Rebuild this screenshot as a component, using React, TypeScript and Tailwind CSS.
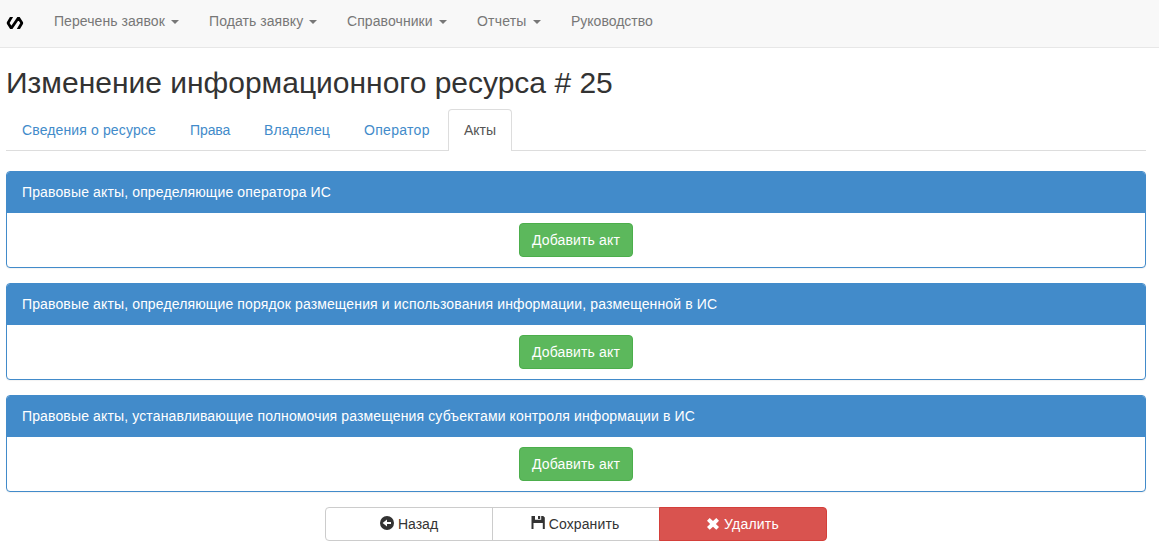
import React from "react";

const menu = [
  { label: "Перечень заявок", caret: true, style: "w-[155px] tracking-[0.06px]" },
  { label: "Подать заявку", caret: true, style: "w-[138px] tracking-[0.07px]" },
  { label: "Справочники", caret: true, style: "w-[130px] tracking-[0.08px]" },
  { label: "Отчеты", caret: true, style: "w-[94px] tracking-[0.2px]" },
  { label: "Руководство", caret: false, style: "w-[112px]" },
];

const tabs = [
  { label: "Сведения о ресурсе", style: "w-[166px] tracking-[0.13px]" },
  { label: "Права", style: "w-[72px] tracking-[-0.1px]" },
  { label: "Владелец", style: "w-[98px] tracking-[0.16px]" },
  { label: "Оператор", style: "w-[98px] tracking-[0.3px]" },
  { label: "Акты", style: "w-16", active: true },
];

const panels = [
  "Правовые акты, определяющие оператора ИС",
  "Правовые акты, определяющие порядок размещения и использования информации, размещенной в ИС",
  "Правовые акты, устанавливающие полномочия размещения субъектами контроля информации в ИС",
];

function Logo() {
  return (
    <svg width="18" height="12" viewBox="0 0 18 12" fill="none" stroke="#000" strokeWidth="2.8">
      <path d="M5.9 -0.6L2 6L5.3 11.2L12.5 0.8L15.9 6L12 12.6" strokeLinejoin="bevel" />
    </svg>
  );
}

function BackIcon() {
  return (
    <svg className="mb-0.5" width="14" height="14" viewBox="0 0 14 14">
      <circle cx="7" cy="7" r="7" fill="#333" />
      <path d="M2.6 7L7 3.5V5.9H11V8.1H7V10.5Z" fill="#fff" />
    </svg>
  );
}

function SaveIcon() {
  return (
    <svg className="mb-0.5" width="14" height="14" viewBox="0 0 14 14">
      <path d="M0.5 0H4V3.8H10.2V0H12.2L13.8 1.6V13H11.8V7H2.5V13H0.5Z" fill="#333" />
      <path d="M7 0H9.2V3H7Z" fill="#333" />
    </svg>
  );
}

function RemoveIcon() {
  return (
    <svg className="mb-px" width="14" height="14" viewBox="0 0 14 14">
      <path
        d="M3.7 1L7 4.1L10.3 1L13 3.7L9.9 6.9L13 10.1L10.3 12.8L7 9.7L3.7 12.8L1 10.1L4.1 6.9L1 3.7Z"
        fill="#fff"
      />
    </svg>
  );
}

export default function App() {
  return (
    <div className="min-h-[551px] bg-white font-['Liberation_Sans',Arial,sans-serif] text-sm leading-5 text-[#333]">
      <nav className="flex h-12 items-start border-b border-[#e7e7e7] bg-[#f8f8f8] pl-1.5">
        <div className="mt-[17px] mr-[15px] w-[18px]">
          <Logo />
        </div>
        <ul className="flex">
          {menu.map((item) => (
            <li
              key={item.label}
              className={`flex items-center justify-between px-[15px] pt-[11px] whitespace-nowrap text-[#777] ${item.style}`}
            >
              {item.label}
              {item.caret && (
                <span className="mt-0.5 h-0 w-0 border-x-4 border-t-4 border-x-transparent border-t-[#777]" />
              )}
            </li>
          ))}
        </ul>
      </nav>
      <main className="w-[1146px] pl-1.5">
        <h1 className="pt-[18px] pb-2.5 text-[30px] leading-[33px]">Изменение информационного ресурса # 25</h1>
        <ul className="flex h-[42px] gap-0.5 border-b border-[#ddd]">
          {tabs.map((tab) => (
            <li
              key={tab.label}
              className={`h-[42px] px-[15px] py-2.5 whitespace-nowrap ${tab.style} ${
                tab.active
                  ? "rounded-t border border-b-0 border-[#ddd] bg-white text-[#555]"
                  : "border border-transparent text-[#428bca]"
              }`}
            >
              {tab.label}
            </li>
          ))}
        </ul>
        <div className="mt-5 flex flex-col gap-[15px]">
          {panels.map((title) => (
            <section key={title} className="rounded border border-[#428bca] bg-white shadow-[0_1px_1px_rgba(0,0,0,0.05)]">
              <h2 className="h-[41px] rounded-t-[3px] bg-[#428bca] px-[15px] py-2.5 tracking-[0.134px] text-white">
                {title}
              </h2>
              <div className="flex justify-center py-2.5">
                <button className="h-[34px] w-[114px] rounded border border-[#4cae4c] bg-[#5cb85c] tracking-[0.16px] whitespace-nowrap text-white">
                  Добавить акт
                </button>
              </div>
            </section>
          ))}
        </div>
        <div className="mx-auto mt-[15px] flex h-[34px] w-[502px]">
          <button className="flex w-[168px] items-center justify-center gap-1 rounded-l border border-[#ccc]">
            <BackIcon />
            Назад
          </button>
          <button className="-ml-px flex w-[168px] items-center justify-center gap-1 border border-[#ccc] pr-0.5 tracking-[0.12px]">
            <SaveIcon />
            Сохранить
          </button>
          <button className="-ml-px flex w-[168px] items-center justify-center gap-1 rounded-r border border-[#d43f3a] bg-[#d9534f] pr-px tracking-[0.2px] text-white">
            <RemoveIcon />
            Удалить
          </button>
        </div>
      </main>
    </div>
  );
}
